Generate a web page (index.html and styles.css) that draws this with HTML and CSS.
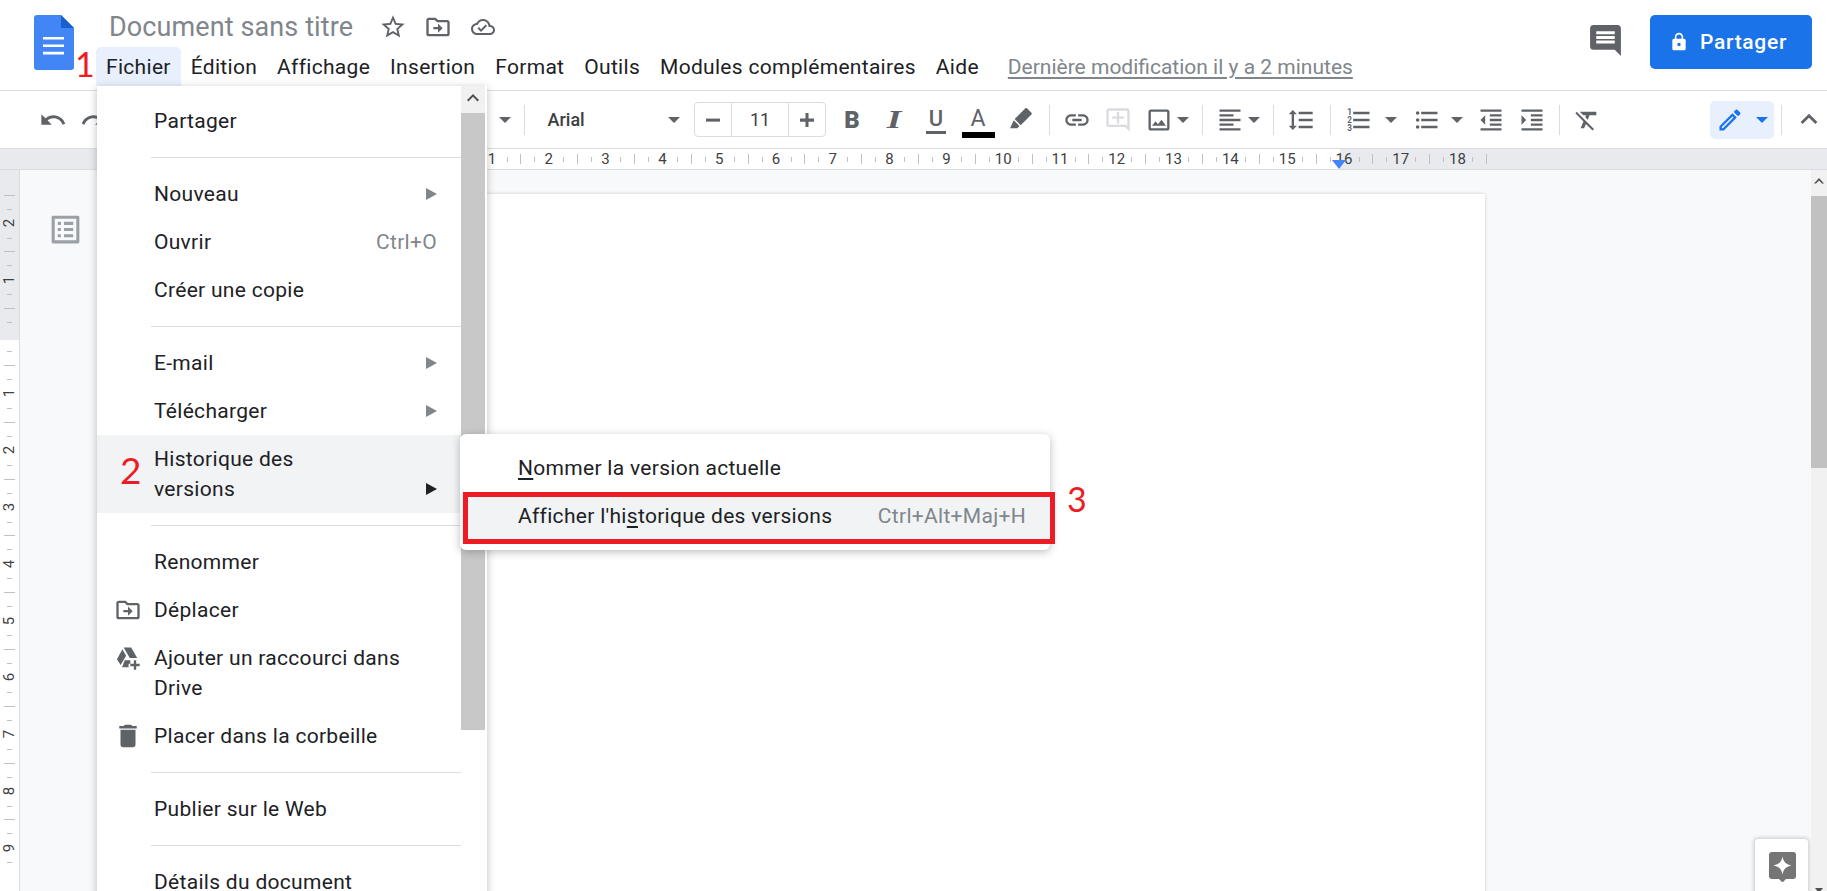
FILE: index.html
```html
<!DOCTYPE html>
<html lang="fr">
<head>
  <meta charset="UTF-8" />
  <title>Document sans titre</title>
  <link rel="stylesheet" href="styles.css">
</head>
<body>
<div class="app">

  <!-- Title and menu bar -->
  <header class="topbar">
    <svg class="logo" viewBox="0 0 40 55">
      <path fill="#4285f4" d="M3 0h24l13 13v39a3 3 0 0 1-3 3H3a3 3 0 0 1-3-3V3a3 3 0 0 1 3-3z"/>
      <path fill="#1a5fcf" d="M27 0l13 13H27z"/>
      <path fill="#fff" d="M9 22h21v2.6H9zM9 29.400h21v2.600H9zM9 36.800h21v2.600H9z"/>
    </svg>
    <div class="doc-head">
      <div class="title-row">
        <span class="doc-title">Document sans titre</span>
        <svg class="icon star" viewBox="0 0 24 24"><path d="M22 9.240l-7.190-.62L12 2 9.190 8.630 2 9.240l5.460 4.730L5.820 21 12 17.270 18.180 21l-1.630-7.030L22 9.240zM12 15.400l-3.760 2.270 1-4.280-3.320-2.880 4.380-.38L12 6.100l1.710 4.040 4.380.38-3.320 2.880 1 4.280L12 15.400z"/></svg>
        <svg class="icon" viewBox="0 0 24 24"><path d="M20 6h-8l-2-2H4c-1.100 0-1.990.9-1.990 2L2 18c0 1.100.9 2 2 2h16c1.100 0 2-.9 2-2V8c0-1.100-.9-2-2-2zm0 12H4V6h5.170l2 2H20v10zm-8-4H8v-2h4V9l4 4-4 4v-3z"/></svg>
        <svg class="icon cloud" viewBox="0 0 24 24"><path d="M19.350 10.040C18.670 6.590 15.640 4 12 4 9.110 4 6.600 5.640 5.350 8.040 2.340 8.360 0 10.910 0 14c0 3.310 2.690 6 6 6h13c2.760 0 5-2.240 5-5 0-2.640-2.050-4.780-4.650-4.960zM19 18H6c-2.210 0-4-1.790-4-4 0-2.050 1.530-3.760 3.560-3.970l1.070-.11.5-.95C8.080 7.140 9.940 6 12 6c2.620 0 4.880 1.860 5.390 4.430l.3 1.500 1.530.11c1.560.1 2.780 1.410 2.780 2.960 0 1.650-1.350 3-3 3zm-9-3.820l-2.090-2.090L6.500 13.500 10 17l6.010-6.010-1.410-1.410z"/></svg>
      </div>
      <nav class="menubar">
        <span class="menu-link active">Fichier</span>
        <span class="menu-link">Édition</span>
        <span class="menu-link">Affichage</span>
        <span class="menu-link">Insertion</span>
        <span class="menu-link">Format</span>
        <span class="menu-link">Outils</span>
        <span class="menu-link">Modules complémentaires</span>
        <span class="menu-link">Aide</span>
        <span class="last-edit">Dernière modification il y a 2 minutes</span>
      </nav>
    </div>
    <svg class="comments" viewBox="0 0 24 24"><path d="M21.990 4c0-1.100-.89-2-1.990-2H4c-1.100 0-2 .9-2 2v12c0 1.100.9 2 2 2h14l4 4-.01-18zM18 14H6v-2h12v2zm0-3H6V9h12v2zm0-3H6V6h12v2z"/></svg>
    <button class="share">
      <svg viewBox="0 0 24 24"><path d="M18 8h-1V6c0-2.760-2.240-5-5-5S7 3.240 7 6v2H6c-1.100 0-2 .9-2 2v10c0 1.100.9 2 2 2h12c1.100 0 2-.9 2-2V10c0-1.100-.9-2-2-2zm-6 9c-1.100 0-2-.9-2-2s.9-2 2-2 2 .9 2 2-.9 2-2 2zm3.100-9H8.900V6c0-1.710 1.390-3.100 3.100-3.100 1.710 0 3.100 1.390 3.100 3.100v2z"/></svg>
      Partager
    </button>
  </header>

  <!-- Formatting toolbar -->
  <div class="toolbar">
    <svg class="icon" viewBox="0 0 24 24"><path d="M12.500 8c-2.650 0-5.050.99-6.900 2.600L2 7v9h9l-3.620-3.620c1.390-1.160 3.160-1.880 5.120-1.880 3.540 0 6.550 2.310 7.600 5.500l2.370-.78C21.080 11.030 17.150 8 12.500 8z"/></svg>
    <svg class="icon" viewBox="0 0 24 24"><path d="M18.400 10.600C16.550 8.990 14.150 8 11.500 8c-4.650 0-8.580 3.030-9.960 7.220L3.900 16c1.050-3.190 4.050-5.500 7.600-5.500 1.950 0 3.730.72 5.120 1.880L13 16h9V7l-3.600 3.600z"/></svg>
    <div class="hidden-tools"></div>
    <i class="caret"></i>
    <i class="sep"></i>
    <div class="font-select"><span>Arial</span><i class="caret"></i></div>
    <div class="size-box">
      <span class="size-btn"><svg class="icon" viewBox="0 0 24 24"><path d="M6 10.800h12v2.600H6z"/></svg></span>
      <span class="size-value">11</span>
      <span class="size-btn"><svg class="icon" viewBox="0 0 24 24"><path d="M10.700 6h2.600v4.800H18v2.600h-4.700V18h-2.600v-4.600H6v-2.600h4.700z"/></svg></span>
    </div>
    <div class="text-tools">
      <span class="glyph bold">B</span>
      <span class="glyph italic">I</span>
      <span class="glyph under">U</span>
      <span class="glyph color">A</span>
      <svg class="icon marker" viewBox="0 0 24 24"><path d="M18.200 1.300l4.300 4.300c.5.5.5 1 0 1.500L12.200 17.400 6.400 11.600 16.700 1.300c.5-.5 1-.5 1.500 0zM5.500 12.800l5.500 5.500-2 2H2z"/></svg>
    </div>
    <i class="sep"></i>
    <svg class="icon" viewBox="0 0 24 24"><path d="M3.900 12c0-1.710 1.390-3.100 3.100-3.100h4V7H7c-2.760 0-5 2.240-5 5s2.240 5 5 5h4v-1.900H7c-1.710 0-3.100-1.390-3.100-3.100zM8 13h8v-2H8v2zm9-6h-4v1.900h4c1.710 0 3.100 1.390 3.100 3.100s-1.390 3.100-3.100 3.100h-4V17h4c2.760 0 5-2.240 5-5s-2.240-5-5-5z"/></svg>
    <svg class="icon off" viewBox="0 0 24 24"><path d="M22 4c0-1.100-.9-2-2-2H4c-1.100 0-2 .9-2 2v12c0 1.100.9 2 2 2h14l4 4V4zm-2 13.170L18.830 16H4V4h16v13.170zM13 5h-2v4H7v2h4v4h2v-4h4V9h-4z"/></svg>
    <svg class="icon" viewBox="0 0 24 24"><path d="M19 5v14H5V5h14m0-2H5c-1.100 0-2 .9-2 2v14c0 1.100.9 2 2 2h14c1.100 0 2-.9 2-2V5c0-1.100-.9-2-2-2zM14.140 11.860l-3 3.870L9 13.140 6 17h12z"/></svg>
    <i class="caret near"></i>
    <i class="sep"></i>
    <svg class="icon" viewBox="0 0 24 24"><path d="M15 15H3v2h12v-2zm0-8H3v2h12V7zM3 13h18v-2H3v2zm0 8h18v-2H3v2zM3 3v2h18V3H3z"/></svg>
    <i class="caret near"></i>
    <i class="sep"></i>
    <svg class="icon line-tool" viewBox="0 0 24 24"><path d="M6 7h2.500L5 3.500 1.500 7H4v10H1.500L5 20.500 8.500 17H6V7zm4-2v2h12V5H10zm0 14h12v-2H10v2zm0-6h12v-2H10v2z"/></svg>
    <i class="sep"></i>
    <svg class="icon numbers" viewBox="0 0 24 24">
      <path d="M7 5v2h14V5H7zm0 14h14v-2H7v2zm0-6h14v-2H7v2z"/>
      <text class="list-num" x="2" y="8">1</text>
      <text class="list-num" x="2" y="14.500">2</text>
      <text class="list-num" x="2" y="21">3</text>
    </svg>
    <i class="caret numbers-caret"></i>
    <svg class="icon bullets" viewBox="0 0 24 24"><path d="M4 10.500c-.83 0-1.500.67-1.500 1.500s.67 1.500 1.500 1.500 1.500-.67 1.500-1.500-.67-1.500-1.500-1.500zm0-6c-.83 0-1.500.67-1.500 1.500S3.170 7.500 4 7.500 5.500 6.830 5.500 6 4.830 4.500 4 4.500zm0 12c-.83 0-1.500.68-1.500 1.500s.68 1.500 1.500 1.500 1.500-.68 1.500-1.500-.67-1.500-1.500-1.500zM7 19h14v-2H7v2zm0-6h14v-2H7v2zm0-8v2h14V5H7z"/></svg>
    <i class="caret tight"></i>
    <svg class="icon outdent" viewBox="0 0 24 24"><path d="M11 17h10v-2H11v2zm-8-5l4 4V8l-4 4zm0 9h18v-2H3v2zM3 3v2h18V3H3zm8 6h10V7H11v2zm0 4h10v-2H11v2z"/></svg>
    <svg class="icon" viewBox="0 0 24 24"><path d="M3 21h18v-2H3v2zM3 8v8l4-4-4-4zm8 9h10v-2H11v2zM3 3v2h18V3H3zm8 6h10V7H11v2zm0 4h10v-2H11v2z"/></svg>
    <i class="sep"></i>
    <svg class="icon" viewBox="0 0 24 24"><path d="M3.270 5L2 6.270l6.970 6.970L6.500 19h3l1.570-3.660L16.730 21 18 19.730 3.550 5.270 3.270 5zM6 5v.18L8.820 8h2.400l-.72 1.680 2.100 2.100L14.210 8H20V5H6z"/></svg>
    <div class="edit-mode">
      <svg class="icon" viewBox="0 0 24 24"><path d="M14.060 9.020l.92.92L5.920 19H5v-.92l9.060-9.060M17.660 3c-.25 0-.51.1-.7.29l-1.830 1.830 3.750 3.750 1.830-1.830c.39-.39.39-1.020 0-1.410l-2.340-2.340c-.2-.2-.45-.29-.71-.29zm-3.600 3.190L3 17.250V21h3.750L17.810 9.940l-3.750-3.750z"/></svg>
      <i class="caret"></i>
    </div>
    <i class="sep sep-last"></i>
    <svg class="icon" viewBox="0 0 20 20"><path d="M10 5.500l-6 6 1.410 1.410L10 8.330l4.590 4.580L16 11.500z"/></svg>
  </div>

  <!-- Horizontal ruler, one cell per cm -->
  <div class="hruler">
    <span class="cm">1</span><span class="cm">2</span><span class="cm">3</span>
    <span class="cm">4</span><span class="cm">5</span><span class="cm">6</span>
    <span class="cm">7</span><span class="cm">8</span><span class="cm">9</span>
    <span class="cm">10</span><span class="cm">11</span><span class="cm">12</span>
    <span class="cm">13</span><span class="cm">14</span><span class="cm">15</span>
    <span class="cm">16</span><span class="cm">17</span><span class="cm">18</span>
    <span class="cm cm-end"></span>
    <i class="indent-marker"></i>
  </div>

  <div class="workspace">
    <div class="vruler">
      <div class="vcm"><span>2</span></div>
      <div class="vcm"><span>1</span></div>
      <div class="vcm"></div>
      <div class="vcm"><span>1</span></div>
      <div class="vcm"><span>2</span></div>
      <div class="vcm"><span>3</span></div>
      <div class="vcm"><span>4</span></div>
      <div class="vcm"><span>5</span></div>
      <div class="vcm"><span>6</span></div>
      <div class="vcm"><span>7</span></div>
      <div class="vcm"><span>8</span></div>
      <div class="vcm"><span>9</span></div>
    </div>
    <div class="canvas">
      <svg class="outline-btn" viewBox="0 0 24 24"><path d="M19 5v14H5V5h14m1.100-2H3.900c-.5 0-.9.4-.9.9v16.200c0 .4.4.9.9.9h16.200c.4 0 .9-.5.9-.9V3.900c0-.5-.5-.9-.9-.9zM11 7h6v2h-6V7zm0 4h6v2h-6v-2zm0 4h6v2h-6zM7 7h2v2H7zm0 4h2v2H7zm0 4h2v2H7z"/></svg>
      <div class="page"></div>
      <div class="explore">
        <svg viewBox="0 0 27 30">
          <path fill="#757575" d="M3 0h21a3 3 0 0 1 3 3v21a3 3 0 0 1-3 3h-7l-3.500 3.500L10 27H3a3 3 0 0 1-3-3V3a3 3 0 0 1 3-3z"/>
          <path fill="#fff" d="M13.500 4.500c.9 5.300 3.200 7.800 9 9-5.800 1.200-8.100 3.700-9 9-.9-5.300-3.200-7.800-9-9 5.800-1.200 8.100-3.700 9-9z"/>
        </svg>
      </div>
    </div>
    <div class="scrollbar">
      <div class="scroll-arrow"><svg viewBox="0 0 16 16"><path d="M8 5L3 10.500h2L8 7.500l3 3h2z"/></svg></div>
      <div class="scroll-thumb"></div>
      <i class="scroll-down"></i>
    </div>
  </div>

  <!-- File menu -->
  <div class="file-menu">
    <div class="menu-list">
      <div class="item"><span class="slot"></span><span class="label">Partager</span></div>
      <div class="divider"></div>
      <div class="item"><span class="slot"></span><span class="label">Nouveau</span><i class="arrow"></i></div>
      <div class="item"><span class="slot"></span><span class="label">Ouvrir</span><span class="shortcut">Ctrl+O</span></div>
      <div class="item"><span class="slot"></span><span class="label">Créer une copie</span></div>
      <div class="divider"></div>
      <div class="item"><span class="slot"></span><span class="label">E-mail</span><i class="arrow"></i></div>
      <div class="item"><span class="slot"></span><span class="label">Télécharger</span><i class="arrow"></i></div>
      <div class="item open"><span class="slot"></span><span class="label">Historique des<br>versions</span><i class="arrow arrow-low"></i></div>
      <div class="divider"></div>
      <div class="item"><span class="slot"></span><span class="label">Renommer</span></div>
      <div class="item">
        <span class="slot"><svg class="icon" viewBox="0 0 24 24"><path d="M20 6h-8l-2-2H4c-1.100 0-1.990.9-1.990 2L2 18c0 1.100.9 2 2 2h16c1.100 0 2-.9 2-2V8c0-1.100-.9-2-2-2zm0 12H4V6h5.170l2 2H20v10zm-8-4H8v-2h4V9l4 4-4 4v-3z"/></svg></span>
        <span class="label">Déplacer</span>
      </div>
      <div class="item">
        <span class="slot"><svg class="icon" viewBox="0 0 24 24"><path d="M8.300 3h6.400l5.200 9h-6.400zM7.200 4.500l3.200 5.500-4.700 8L2.500 13zM9.200 14h4.800v3h-1.500v3H6.900zM17 14h2v3h3v2h-3v3h-2v-3h-3v-2h3z"/></svg></span>
        <span class="label">Ajouter un raccourci dans<br>Drive</span>
      </div>
      <div class="item">
        <span class="slot"><svg class="icon trash" viewBox="0 0 24 24"><path d="M6 19c0 1.100.9 2 2 2h8c1.100 0 2-.9 2-2V7H6v12zM19 4h-3.500l-1-1h-5l-1 1H5v2h14V4z"/></svg></span>
        <span class="label">Placer dans la corbeille</span>
      </div>
      <div class="divider"></div>
      <div class="item"><span class="slot"></span><span class="label">Publier sur le Web</span></div>
      <div class="divider"></div>
      <div class="item"><span class="slot"></span><span class="label">Détails du document</span></div>
    </div>
    <div class="menu-scroll">
      <div class="menu-scroll-up"><svg viewBox="0 0 24 24"><path d="M12 8l-6 6 1.410 1.410L12 10.830l4.590 4.580L18 14z"/></svg></div>
      <div class="menu-scroll-thumb"></div>
    </div>
  </div>

  <!-- Version history submenu -->
  <div class="submenu">
    <div class="sub-item"><span><u>N</u>ommer la version actuelle</span></div>
    <div class="sub-item current"><span>Afficher l'hi<u>s</u>torique des versions</span><span class="shortcut">Ctrl+Alt+Maj+H</span></div>
  </div>

  <!-- Red annotations -->
  <div class="red-box"></div>
  <span class="mark mark-1">1</span>
  <span class="mark mark-2">2</span>
  <span class="mark mark-3">3</span>
</div>
</body>
</html>
```

FILE: styles.css
```css
* {
  box-sizing: border-box;
}
html, body {
  margin: 0;
  height: 100%;
  overflow: hidden;
}
body {
  font-family: Roboto, Arial, sans-serif;
  font-size: 21px;
  color: #202124;
  background: #fff;
}
.app {
  position: relative;
  width: 1827px;
  height: 891px;
  overflow: hidden;
  display: flex;
  flex-direction: column;
}
.icon {
  width: 28px;
  height: 28px;
  fill: #5f6368;
  flex: none;
  display: block;
}
.icon.off {
  fill: #dadce0;
}

/* Top bar */
.topbar {
  height: 91px;
  flex: none;
  display: flex;
  align-items: flex-start;
  padding-left: 34px;
  border-bottom: 1px solid #dadce0;
}
.logo {
  width: 40px;
  height: 55px;
  margin: 15px 22px 0 0;
  flex: none;
}
.doc-head {
  flex: 1;
}
.title-row {
  height: 47px;
  padding: 7px 0 0 13px;
  display: flex;
  align-items: center;
  gap: 15px;
}
.doc-title {
  font-size: 27px;
  line-height: 40px;
  color: #80868b;
  margin-right: 11px;
  letter-spacing: .1px;
}
.title-row .star {
  margin-right: 2px;
}
.title-row .cloud {
  width: 24px;
  height: 24px;
  margin-left: 4px;
}
.menubar {
  display: flex;
  height: 39px;
  align-items: center;
}
.menu-link {
  height: 39px;
  line-height: 41px;
  padding: 0 10px;
  border-radius: 5px 5px 0 0;
  letter-spacing: .3px;
}
.menu-link.active {
  background: #e8f0fe;
}
.last-edit {
  margin-left: 19px;
  margin-top: 1px;
  color: #80868b;
  text-decoration: underline;
  text-underline-offset: 3px;
}
.comments {
  width: 37px;
  height: 37px;
  margin: 22px 26px 0 0;
  fill: #5f6368;
}
.share {
  width: 162px;
  height: 54px;
  margin: 15px 15px 0 0;
  display: flex;
  align-items: center;
  gap: 11px;
  padding: 0 0 0 19px;
  border: 0;
  border-radius: 5px;
  background: #1a73e8;
  color: #fff;
  font: 500 21px Roboto, Arial, sans-serif;
  letter-spacing: .7px;
}
.share svg {
  width: 20px;
  height: 20px;
  fill: #fff;
}

/* Toolbar */
.toolbar {
  height: 58px;
  flex: none;
  display: flex;
  align-items: center;
  gap: 13px;
  padding: 0 4px 0 39px;
  border-bottom: 1px solid #dadce0;
}
.hidden-tools {
  width: 364.5px;
}
.caret {
  width: 0;
  height: 0;
  flex: none;
  border-left: 6px solid transparent;
  border-right: 6px solid transparent;
  border-top: 6px solid #5f6368;
}
.caret.near {
  margin-left: -9px;
}
.caret.tight {
  margin-left: -3.500px;
}
.sep {
  width: 1px;
  height: 30px;
  flex: none;
  background: #dadce0;
}
.sep-last {
  margin-left: -6px;
}
.font-select {
  width: 169.5px;
  margin-left: -13px;
  padding: 0 14px 0 23px;
  flex: none;
  display: flex;
  align-items: center;
  justify-content: space-between;
  font-size: 18px;
  font-weight: 500;
  color: #3c4043;
}
.size-box {
  width: 132px;
  height: 35px;
  margin-left: -13px;
  flex: none;
  display: flex;
  border: 1px solid #dadce0;
  border-radius: 4px;
}
.size-btn {
  width: 36px;
  flex: none;
  display: flex;
  align-items: center;
  justify-content: center;
}
.size-value {
  flex: 1;
  text-align: center;
  line-height: 33px;
  font-size: 18px;
  color: #3c4043;
  border-left: 1px solid #dadce0;
  border-right: 1px solid #dadce0;
}
.text-tools {
  display: flex;
  align-items: center;
  gap: 14px;
  margin: 0 3px 0 -1px;
}
.text-tools .marker {
  width: 25px;
  height: 25px;
  margin-left: 2px;
}
.glyph {
  width: 28px;
  height: 28px;
  flex: none;
  display: block;
  text-align: center;
  line-height: 28px;
  color: #5f6368;
  font-size: 24px;
}
.glyph.bold {
  font-weight: 900;
}
.glyph.italic {
  font-family: "Liberation Serif", serif;
  font-style: italic;
  font-weight: 700;
  font-size: 25px;
  transform: scaleX(1.5);
}
.glyph.under {
  font-size: 22px;
  font-weight: 500;
  line-height: 25px;
  position: relative;
}
.glyph.under::after {
  content: "";
  position: absolute;
  left: 4px;
  right: 4px;
  bottom: 0;
  height: 3px;
  background: #5f6368;
}
.glyph.color {
  font-size: 23px;
  line-height: 25px;
  position: relative;
}
.glyph.color::after {
  content: "";
  position: absolute;
  left: -2px;
  right: -3px;
  bottom: -4px;
  height: 6px;
  background: #000;
}
.line-tool {
  margin-right: 1.500px;
}
.numbers {
  margin-left: 1.500px;
}
.numbers-caret {
  margin-left: -1.500px;
}
.bullets {
  margin-left: 3.500px;
}
.outdent {
  margin-left: 1.500px;
}
.list-num {
  font-size: 7px;
  font-family: Roboto, sans-serif;
  font-weight: 700;
}
.edit-mode {
  width: 64px;
  height: 38px;
  margin-left: auto;
  flex: none;
  display: flex;
  align-items: center;
  gap: 12px;
  padding-left: 6px;
  border-radius: 5px;
  background: #e8f0fe;
}
.edit-mode .icon {
  fill: #1a73e8;
}
.edit-mode .caret {
  border-top-color: #1a73e8;
}

/* Rulers */
.hruler {
  height: 21px;
  flex: none;
  position: relative;
  display: flex;
  padding-left: 463.600px;
  border-bottom: 1px solid #dadce0;
  background: linear-gradient(to right, #e8eaed 434px, #fff 434px, #fff 1340px, #e8eaed 1340px);
}
.cm {
  width: 56.800px;
  flex: none;
  text-align: center;
  font-size: 15px;
  line-height: 20px;
  color: #3c4043;
  background-image:
    linear-gradient(#bdc1c6, #bdc1c6),
    linear-gradient(#bdc1c6, #bdc1c6),
    linear-gradient(#bdc1c6, #bdc1c6);
  background-repeat: no-repeat;
  background-size: 1px 10px, 1px 5px, 1px 5px;
  background-position: 0 5px, 14px 8px, 43px 8px;
}
.cm-end {
  width: 1px;
}
.indent-marker {
  position: absolute;
  left: 1332px;
  top: 11px;
  width: 0;
  height: 0;
  border-left: 7px solid transparent;
  border-right: 7px solid transparent;
  border-top: 9px solid #4285f4;
}
.workspace {
  flex: 1;
  min-height: 0;
  display: flex;
  overflow: hidden;
}
.vruler {
  width: 20px;
  flex: none;
  padding-top: 24.600px;
  border-right: 1px solid #dadce0;
  background: linear-gradient(#e8eaed 170px, #fff 170px);
  overflow: hidden;
}
.vcm {
  height: 56.800px;
  display: flex;
  align-items: center;
  justify-content: center;
  font-size: 15px;
  color: #3c4043;
  background-image:
    linear-gradient(#bdc1c6, #bdc1c6),
    linear-gradient(#bdc1c6, #bdc1c6),
    linear-gradient(#bdc1c6, #bdc1c6);
  background-repeat: no-repeat;
  background-size: 11px 1px, 5px 1px, 5px 1px;
  background-position: 4px 0, 7px 14px, 7px 43px;
}
.vcm span {
  transform: rotate(-90deg);
}
.canvas {
  flex: 1;
  position: relative;
  padding: 24px 0 0 272px;
  background: #f8f9fa;
  overflow: hidden;
}
.page {
  width: 1193px;
  height: 1700px;
  background: #fff;
  box-shadow: 0 0 3px rgba(60, 64, 67, .25);
}
.outline-btn {
  position: absolute;
  left: 27px;
  top: 41px;
  width: 37px;
  height: 37px;
  fill: #9aa0a6;
}
.explore {
  position: absolute;
  left: 1734px;
  top: 668px;
  width: 55px;
  height: 70px;
  padding: 13px 0 0 14px;
  background: #fff;
  border: 1px solid #dadce0;
  border-radius: 4px 4px 0 0;
  box-shadow: 0 0 4px rgba(0, 0, 0, .2);
}
.explore svg {
  width: 27px;
  height: 30px;
  display: block;
}
.scrollbar {
  width: 16px;
  flex: none;
  position: relative;
  background: #f1f1f1;
}
.scroll-arrow {
  height: 26px;
  padding-top: 3px;
}
.scroll-arrow svg {
  width: 16px;
  height: 16px;
  display: block;
  fill: #505050;
}
.scroll-thumb {
  height: 272px;
  background: #c1c1c1;
}
.scroll-down {
  position: absolute;
  left: 4px;
  bottom: -2px;
  width: 0;
  height: 0;
  border-left: 4px solid transparent;
  border-right: 4px solid transparent;
  border-top: 5px solid #505050;
}

/* File menu */
.file-menu {
  position: absolute;
  left: 97px;
  top: 86px;
  width: 390px;
  height: 830px;
  display: flex;
  background: #fff;
  padding-right: 2px;
  box-shadow: 0 2px 8px rgba(60, 64, 67, .35);
}
.menu-list {
  width: 364px;
  flex: none;
  padding-top: 10.500px;
  letter-spacing: .3px;
}
.item {
  display: flex;
  align-items: flex-start;
  padding: 9px 24px 9px 14px;
  line-height: 30px;
}
.item.open {
  background: #f1f3f4;
}
.slot {
  width: 43px;
  height: 30px;
  flex: none;
  display: flex;
  align-items: center;
  justify-content: center;
  padding-right: 9px;
}
.slot .trash {
  width: 30px;
  height: 30px;
}
.label {
  flex: 1;
  white-space: nowrap;
}
.shortcut {
  color: #80868b;
  letter-spacing: .3px;
}
.arrow {
  width: 0;
  height: 0;
  flex: none;
  margin-top: 9px;
  border-top: 6px solid transparent;
  border-bottom: 6px solid transparent;
  border-left: 11px solid #80868b;
}
.arrow-low {
  margin-top: 39px;
  border-left-color: #202124;
}
.divider {
  height: 25.100px;
  margin-left: 54px;
  display: flex;
  align-items: center;
}
.divider::before {
  content: "";
  flex: 1;
  height: 1px;
  background: #dadce0;
}
.menu-scroll {
  width: 24px;
  flex: none;
}
.menu-scroll-up {
  height: 27px;
  background: #f1f1f1;
}
.menu-scroll-up svg {
  width: 24px;
  height: 24px;
  display: block;
  fill: #505050;
}
.menu-scroll-thumb {
  height: 617px;
  background: #c8c8c8;
}

/* Version history submenu */
.submenu {
  position: absolute;
  left: 460px;
  top: 434px;
  width: 590px;
  height: 116px;
  padding: 10px 0;
  background: #fff;
  border-radius: 6px;
  box-shadow: 0 2px 8px rgba(60, 64, 67, .35);
  letter-spacing: .3px;
}
.sub-item {
  height: 48px;
  padding: 0 24px 0 58px;
  display: flex;
  align-items: center;
  justify-content: space-between;
}
.sub-item.current {
  background: #f1f3f4;
}
.sub-item u {
  text-underline-offset: 3px;
}

/* Annotations */
.red-box {
  position: absolute;
  left: 463px;
  top: 492px;
  width: 592px;
  height: 52px;
  border: 5px solid #ed1c24;
}
.mark {
  position: absolute;
  font-family: Lato, sans-serif;
  color: #ed1c24;
  line-height: 1;
}
.mark-1 {
  left: 75px;
  top: 47px;
  font-size: 34px;
}
.mark-2 {
  left: 120px;
  top: 451px;
  font-size: 37px;
}
.mark-3 {
  left: 1067px;
  top: 482px;
  font-size: 34px;
}
```
